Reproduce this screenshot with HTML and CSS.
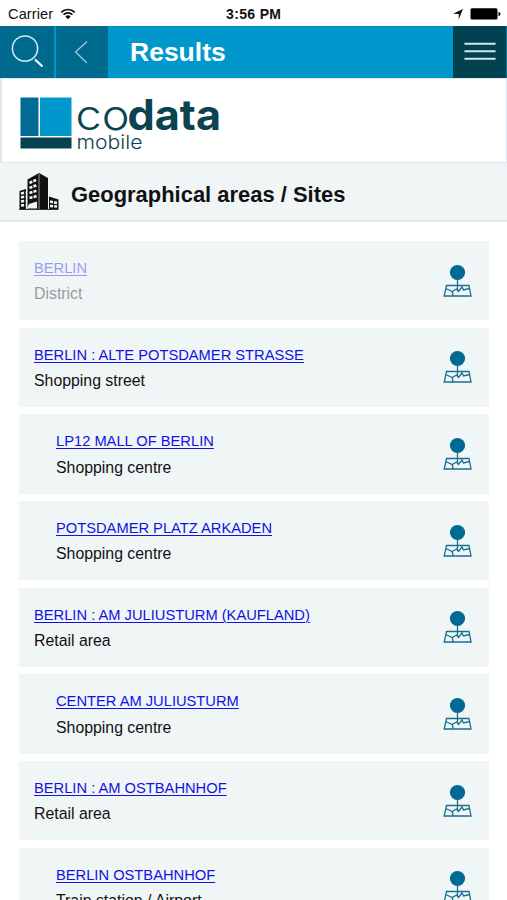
FILE: index.html
```html
<!DOCTYPE html>
<html lang="en">
<head>
<meta charset="utf-8">
<title>Results</title>
<link rel="stylesheet" href="styles.css">
</head>
<body>
<svg class="defs" width="0" height="0">
  <symbol id="pin" viewBox="0 0 30 34">
    <circle cx="14.500" cy="8.500" r="7.600" fill="#006a94"/>
    <path d="M14.500 15v11M3.500 21.500h22.500l2 10.500H1.200zM2.700 24.500l6.500 3 4.300-2.500 2 2.500 3.500-4.500 1.500 3 6-1.500M9.200 27.500l1 4.500" fill="none" stroke="#186f92" stroke-width="1.300"/>
  </symbol>
</svg>
<div class="status">
  <span class="carrier">Carrier</span>
  <svg class="wifi" width="16" height="12" viewBox="0 0 16 12"><path d="M1.200 4.300a9.600 9.600 0 0 1 13.600 0M3.500 6.700a6.400 6.400 0 0 1 9 0" fill="none" stroke="#111" stroke-width="1.700"/><path d="M5.300 8.500a3.900 3.900 0 0 1 5.400 0L8 11.300z" fill="#111"/></svg>
  <span class="time">3:56 PM</span>
  <svg class="power" width="50" height="14" viewBox="0 0 50 14"><path d="M0 6.700 10 2 5.700 12.300V6.900z" fill="#111"/><rect x="17.500" y="1.200" width="27" height="11.300" rx="1.500"/><path d="M45.500 5q2 0 2 2t-2 2z"/></svg>
</div>
<header class="bar">
  <div class="btn search"><svg width="54" height="52" viewBox="0 0 54 52"><circle cx="25" cy="22.500" r="12.600" fill="none" stroke="#d5edf5" stroke-width="1.500"/><path d="m35 33.500 7.500 7" stroke="#fff" stroke-width="2.200"/></svg></div>
  <div class="btn back"><svg width="52" height="52" viewBox="0 0 52 52"><path d="M31 15.500 19.500 26 31 37" fill="none" stroke="#9fd0e2" stroke-width="1.200"/></svg></div>
  <h1>Results</h1>
  <div class="btn menu"><svg width="53" height="52" viewBox="0 0 53 52"><path d="M11.500 17.800h31M11.500 25.300h31M11.500 32.700h31" stroke="#d4e8eb" stroke-width="2"/></svg></div>
</header>
<div class="brand">
  <svg width="220" height="84" viewBox="0 0 220 84">
    <rect x="18.500" y="19.500" width="18" height="38.500" fill="#006b94"/>
    <rect x="38" y="19.500" width="31.500" height="38.500" fill="#0098cc"/>
    <rect x="18.500" y="59.500" width="51" height="11" fill="#05414f"/>
    <g fill="#0b4351">
      <text class="co" x="73.500" y="51.500" textLength="54" lengthAdjust="spacingAndGlyphs">co</text>
      <text class="data" x="125.500" y="51.500" textLength="93.500" lengthAdjust="spacingAndGlyphs">data</text>
      <text class="mobile" x="74.500" y="70.500" textLength="66" lengthAdjust="spacingAndGlyphs">mobile</text>
    </g>
  </svg>
</div>
<div class="section">
  <svg width="40" height="38" viewBox="0 0 40 38">
    <path d="M.5 18l6.500-2v20H.5zM8.500 6.500 20 0l9 5v31H8.500zM30 23.500l9.500 3V36H30z" fill="#111"/>
    <path d="M20 1v35" stroke="#999"/>
    <path d="M10.500 10l7.500-3.500M10.500 15l7.500-3M10.500 20l7.500-2.500M10.500 25l7.500-2M2 20.500l4.500-1M2 24.500l4.500-1M2 28.500l4.500-.8M2 32.500l4.500-.5M31 28.500l7 1.500M31 33l7 .5" stroke="#f0f5f6" stroke-width="2.600" stroke-dasharray="3.100 1.100"/>
    <path d="M8 35.500l2-4.500 8-2.500v7z" fill="#f0f5f6"/>
    <path d="M0 36.500h39.500" stroke="#333"/>
  </svg>
  <h2>Geographical areas / Sites</h2>
</div>
<main class="list">
  <div class="row faded"><div class="txt"><a href="#">BERLIN</a><p>District</p></div><svg class="pin"><use href="#pin"/></svg></div>
  <div class="row"><div class="txt"><a href="#">BERLIN : ALTE POTSDAMER STRASSE</a><p>Shopping street</p></div><svg class="pin"><use href="#pin"/></svg></div>
  <div class="row sub"><div class="txt"><a href="#">LP12 MALL OF BERLIN</a><p>Shopping centre</p></div><svg class="pin"><use href="#pin"/></svg></div>
  <div class="row sub"><div class="txt"><a href="#">POTSDAMER PLATZ ARKADEN</a><p>Shopping centre</p></div><svg class="pin"><use href="#pin"/></svg></div>
  <div class="row"><div class="txt"><a href="#">BERLIN : AM JULIUSTURM (KAUFLAND)</a><p>Retail area</p></div><svg class="pin"><use href="#pin"/></svg></div>
  <div class="row sub"><div class="txt"><a href="#">CENTER AM JULIUSTURM</a><p>Shopping centre</p></div><svg class="pin"><use href="#pin"/></svg></div>
  <div class="row"><div class="txt"><a href="#">BERLIN : AM OSTBAHNHOF</a><p>Retail area</p></div><svg class="pin"><use href="#pin"/></svg></div>
  <div class="row sub"><div class="txt"><a href="#">BERLIN OSTBAHNHOF</a><p>Train station / Airport</p></div><svg class="pin"><use href="#pin"/></svg></div>
</main>
</body>
</html>
```
FILE: styles.css
```css
* { box-sizing: border-box; }
html, body { height: 900px; overflow: hidden; }
body { margin: 0; background: #fff; color: #111; font-family: "Liberation Sans", Arial, sans-serif; display: flex; flex-direction: column; }
.defs { display: none; }
.status { height: 26px; flex: none; display: grid; grid-template-columns: 52px 175px 1fr auto; align-items: center; padding: 1px 4px 0 8px; }
.carrier { font-size: 14.6px; letter-spacing: .1px; }
.time { font-size: 14px; letter-spacing: .35px; font-weight: bold; margin-left: -9px; }
.bar { height: 52px; flex: none; display: flex; align-items: center; background: #0098cc; }
.btn { height: 52px; background: #006a8e; flex: none; }
.btn svg { display: block; }
.search { width: 54px; margin-right: 2px; }
.back { width: 52px; }
.bar h1 { flex: 1; margin: 0; padding-left: 22px; color: #fff; font-size: 26.5px; line-height: 52px; }
.menu { width: 54px; background: #02414f; border-right: 1px solid #0a7896; }
.brand { height: 85px; flex: none; border: solid #dce8ee; border-width: 1px 1px 1px 2px; }
.brand svg { display: block; margin-top: -1px; }
.co { font: 300 42px Inter, sans-serif; }
.data { font: 700 42px Inter, sans-serif; }
.mobile { font: 300 19px Inter, sans-serif; }
.section { height: 59px; flex: none; display: flex; align-items: center; gap: 12px; padding: 0 19px; background: #f0f5f6; border-bottom: 2px solid #e2e9eb; }
.section h2 { margin: 7px 0 0; font-size: 21.95px; }
.list { display: flex; flex-direction: column; gap: 7.5px; padding: 19px 18px 0 19px; }
.row { height: 79.2px; flex: none; display: flex; justify-content: space-between; background: #f0f5f6; padding: 15px 16px 0 15px; }
.sub { padding-left: 37px; }
.txt a { display: block; color: #1212e2; font-size: 14.7px; line-height: 24px; text-decoration-thickness: 1px; text-underline-offset: 2px; }
.txt p { margin: 2.3px 0 0; font-size: 15.85px; line-height: 24px; }
.faded a, .faded p { opacity: .4; }
.pin { width: 30px; height: 34px; margin-top: 7.500px; }
```
